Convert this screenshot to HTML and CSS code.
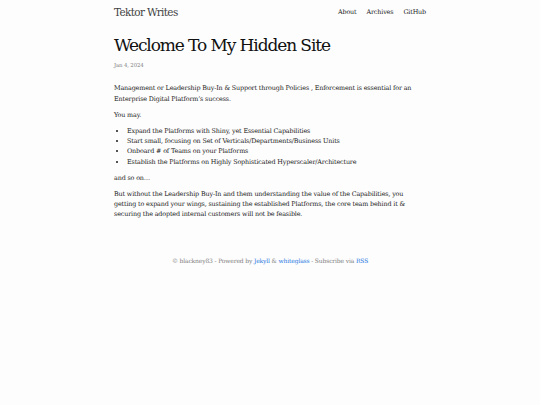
FILE: index.html
```html
<!DOCTYPE html>
<html>
<head>
<meta charset="utf-8">
<link rel="stylesheet" href="styles.css">
</head>
<body>
<header class="site-header">
  <div class="wrapper header-row">
    <a class="site-title" href="#">Tektor Writes</a>
    <nav class="site-nav">
      <a href="#">About</a>
      <a href="#">Archives</a>
      <a href="#">GitHub</a>
    </nav>
  </div>
</header>
<main class="wrapper content">
  <h1 class="post-title">Weclome To My Hidden Site</h1>
  <p class="post-meta">Jan 4, 2024</p>
  <p>Management or Leadership Buy-In &amp; Support through Policies , Enforcement is essential for an Enterprise Digital Platform’s success.</p>
  <p>You may.</p>
  <ul>
    <li>Expand the Platforms with Shiny, yet Essential Capabilities</li>
    <li>Start small, focusing on Set of Verticals/Departments/Business Units</li>
    <li>Onboard # of Teams on your Platforms</li>
    <li>Establish the Platforms on Highly Sophisticated Hyperscaler/Architecture</li>
  </ul>
  <p>and so on…</p>
  <p>But without the Leadership Buy-In and them understanding the value of the Capabilities, you getting to expand your wings, sustaining the established Platforms, the core team behind it &amp; securing the adopted internal customers will not be feasible.</p>
</main>
<footer class="site-footer">
  <p>© blackney83 - Powered by <a href="#">Jekyll</a> &amp; <a href="#">whiteglass</a> - Subscribe via <a href="#">RSS</a></p>
</footer>
</body>
</html>
```
FILE: styles.css
```css
html, body {
  margin: 0;
  padding: 0;
  background: #fdfdfd;
}
body {
  font-family: "DejaVu Serif", serif;
  color: #1a1a1a;
  font-size: 6.4px;
  line-height: 10.4px;
  letter-spacing: -0.15px;
}
a { text-decoration: none; }
.wrapper {
  width: 312px;
  margin: 0 auto;
}
.site-header {
  height: 24px;
}
.header-row {
  display: flex;
  justify-content: space-between;
  align-items: center;
  height: 24px;
}
.site-title {
  font-size: 10.4px;
  color: #424242;
  letter-spacing: -0.6px;
}
.site-nav {
  display: flex;
  gap: 10px;
  font-size: 6.4px;
}
.site-nav a { color: #1a1a1a; }
.content {
  padding-top: 10px;
}
.post-title {
  font-size: 17px;
  font-weight: normal;
  line-height: 22px;
  letter-spacing: -1.1px;
  margin: 0;
  color: #111;
}
.post-meta {
  font-size: 5.4px;
  color: #828282;
  margin: 4px 0 13px;
}
p { margin: 0 0 5.5px; }
ul {
  margin: 0 0 5.5px;
  padding-left: 13px;
}
.site-footer {
  text-align: center;
  color: #828282;
  font-size: 6px;
  padding-top: 31px;
}
.site-footer a { color: #2a7ae2; }
```
